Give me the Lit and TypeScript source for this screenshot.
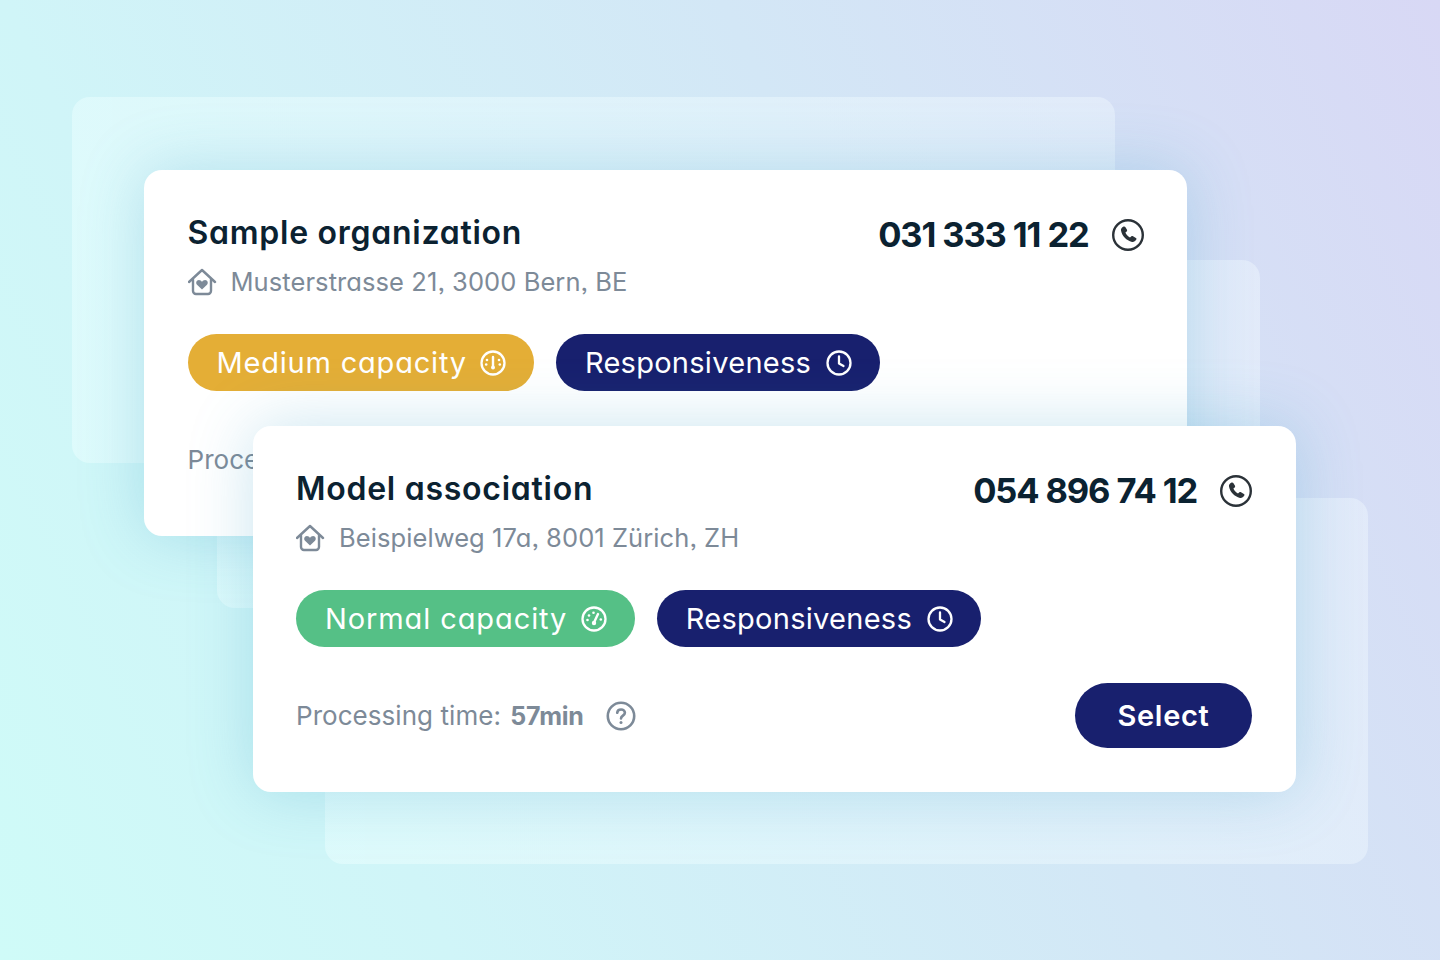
import { LitElement, html, css, svg } from "lit";
import { customElement, property } from "lit/decorators.js";

const houseIcon = svg`<svg class="house" viewBox="1 0 30 28" width="30" height="28" fill="none" stroke="currentColor" stroke-width="2.400" stroke-linecap="round" stroke-linejoin="round"><path d="M2 14 15 2l13 12"/><path d="M6 11.500V23a3 3 0 0 0 3 3h12a3 3 0 0 0 3-3V11.500"/><path fill="currentColor" stroke="none" d="M15 21.400l-5-4.700c-1.600-1.600-.6-4.600 1.900-4.600 1.300 0 2.400.7 3.100 1.800.7-1.100 1.800-1.800 3.100-1.800 2.500 0 3.500 3 1.900 4.600z"/></svg>`;

const phoneIcon = svg`<svg viewBox="0 0 32 32" width="32" height="32" fill="none"><circle cx="16" cy="16" r="14.800" stroke="#2b3238" stroke-width="2.400"/><path fill="#2b3238" d="M11.600 7.600c.6-.4 1.300-.2 1.700.4l1.700 2.800c.3.600.2 1.200-.3 1.600l-1.300 1.100c.8 2.100 2.400 3.900 4.600 5l1.400-1.200c.5-.4 1.100-.4 1.600-.1l2.900 1.700c.6.400.8 1.100.4 1.700-1 1.700-2.700 2.800-4.300 2.400-5.500-1.300-10-6-11-11.400-.3-1.600.7-3.100 2.600-4z"/></svg>`;

const clockIcon = svg`<svg viewBox="0 0 26 26" width="26" height="26" fill="none" stroke="#fff" stroke-width="2.300" stroke-linecap="round" stroke-linejoin="round"><circle cx="13" cy="13" r="11.500"/><path d="M13 6.500V13.500l4.500 2.500"/></svg>`;

const gaugeMedium = svg`<svg viewBox="0 0 26 26" width="26" height="26" fill="none" stroke="#fff" stroke-width="2.300" stroke-linecap="round"><circle cx="13" cy="13" r="11.500"/><path d="M13 7v8.500" stroke-width="2.400"/><circle cx="13" cy="17.500" r="2" fill="#fff" stroke="none"/><g fill="#fff" stroke="none"><circle cx="7" cy="10" r="1.300"/><circle cx="19" cy="10" r="1.300"/><circle cx="6.200" cy="14.500" r="1.300"/><circle cx="19.800" cy="14.500" r="1.300"/></g></svg>`;

const gaugeNormal = svg`<svg viewBox="0 0 26 26" width="26" height="26" fill="none" stroke="#fff" stroke-width="2.300" stroke-linecap="round"><circle cx="13" cy="13" r="11.500"/><path d="M17 8l-3.500 7.500" stroke-width="2.400"/><circle cx="13" cy="17" r="2.200" fill="#fff" stroke="none"/><g fill="#fff" stroke="none"><circle cx="6.500" cy="14" r="1.300"/><circle cx="8" cy="9.500" r="1.300"/><circle cx="12.500" cy="6.800" r="1.300"/><circle cx="19.800" cy="13.500" r="1.300"/></g></svg>`;

const helpIcon = svg`<svg viewBox="0 0 30 30" width="30" height="30" fill="none" stroke="#7d8a98" stroke-width="2.600" stroke-linecap="round"><circle cx="15" cy="15" r="13.200"/><path d="M11.200 11.800c.2-2.100 1.800-3.300 3.900-3.300 2.200 0 3.800 1.400 3.800 3.200 0 2.900-3.900 2.900-3.900 5.700"/><circle cx="15" cy="21.400" r="1.500" fill="#7d8a98" stroke="none"/></svg>`;

@customElement("org-card")
class OrgCard extends LitElement {
  @property() name = "";
  @property() address = "";
  @property() phone = "";
  @property() capacity = "";
  @property() level = "medium";
  @property() time = "";

  static styles = css`
    :host {
      display: flex;
      flex-direction: column;
      box-sizing: border-box;
      padding: 44px 43.500px;
      width: 1043px;
      height: 366px;
      background: #fff;
      border-radius: 18px;
      box-shadow: 0 0 64px rgba(60, 160, 200, 0.27);
      font-family: Inter, "Liberation Sans", sans-serif;
      font-feature-settings: "cv11", "ss03";
      color: #0b2231;
    }
    .head { display: flex; justify-content: space-between; align-items: flex-start; height: 107px; }
    .name { font-size: 32px; font-weight: 600; line-height: 38px; margin: 0; letter-spacing: 0.74px; }
    .addr { display: flex; align-items: center; gap: 13px; margin-top: 13px; font-size: 25.500px; line-height: 34px; color: #7d8a98; letter-spacing: 0.08px; }
    .house { color: #7d8a98; }
    .phone { display: flex; align-items: center; gap: 23px; font-size: 34.500px; font-weight: 700; line-height: 44px; margin-top: -1px; letter-spacing: -1.200px; word-spacing: 0.300px; }
    .chips { display: flex; gap: 22px; margin-top: 15px; }
    .chip { display: flex; align-items: center; gap: 14.500px; height: 57.500px; padding: 0 28px 0 29px; border-radius: 29px; color: #fff; font-size: 29px; font-weight: 400; background: #18206e; letter-spacing: 0.28px; }
    .medium { background: #e4ae36; letter-spacing: 0.8px; gap: 13px; }
    .normal { background: #55c086; letter-spacing: 0.9px; gap: 13.500px; }
    .foot { display: flex; justify-content: space-between; align-items: center; margin-top: 36px; height: 65px; }
    .time { display: flex; align-items: center; gap: 22px; font-size: 26px; color: #7d8a98; letter-spacing: 0.05px; }
    .time b { font-weight: 700; font-size: 25px; letter-spacing: -0.2px; margin-left: 2px; }
    .select { width: 177px; height: 65px; border: 0; border-radius: 33px; background: #18206e; color: #fff; font: inherit; font-size: 29px; font-weight: 600; padding: 0; font-feature-settings: inherit; letter-spacing: 0.7px; }
  `;

  render() {
    return html`
      <div class="head">
        <div>
          <h2 class="name">${this.name}</h2>
          <div class="addr">${houseIcon}<span>${this.address}</span></div>
        </div>
        <div class="phone"><span>${this.phone}</span>${phoneIcon}</div>
      </div>
      <div class="chips">
        <div class="chip ${this.level}">${this.capacity}${this.level === "medium" ? gaugeMedium : gaugeNormal}</div>
        <div class="chip">Responsiveness${clockIcon}</div>
      </div>
      <div class="foot">
        ${this.time
          ? html`<div class="time"><span>Processing time: <b>${this.time}</b></span>${helpIcon}</div><button class="select">Select</button>`
          : html`<div class="time"><span>Processing time:</span></div>`}
      </div>
    `;
  }
}

@customElement("app-root")
class AppRoot extends LitElement {
  static styles = css`
    :host {
      display: block;
      position: relative;
      width: 1440px;
      height: 960px;
      overflow: hidden;
      background: linear-gradient(65deg, #cffbf8 0%, #d0f5f8 24%, #d3e7f6 62%, #d8d8f5 100%);
    }
    .ghost, org-card { position: absolute; }
    .ghost {
      width: 1043px;
      height: 366px;
      border-radius: 18px;
      background: linear-gradient(90deg, rgba(235,255,255,0.5), rgba(240,248,255,0.45));
    }
    .g1 { left: 72px; top: 97px; }
    .g2 { left: 217px; top: 260px; height: 348px; }
    .g3 { left: 325px; top: 498px; }
    .c1 { left: 144px; top: 169.500px; }
    .c2 { left: 252.500px; top: 426.300px; }
  `;

  render() {
    return html`
      <div class="ghost g1"></div>
      <div class="ghost g2"></div>
      <div class="ghost g3"></div>
      <org-card class="c1" name="Sample organization" address="Musterstrasse 21, 3000 Bern, BE" phone="031 333 11 22" capacity="Medium capacity" level="medium"></org-card>
      <org-card class="c2" name="Model association" address="Beispielweg 17a, 8001 Zürich, ZH" phone="054 896 74 12" capacity="Normal capacity" level="normal" time="57min"></org-card>
    `;
  }
}
